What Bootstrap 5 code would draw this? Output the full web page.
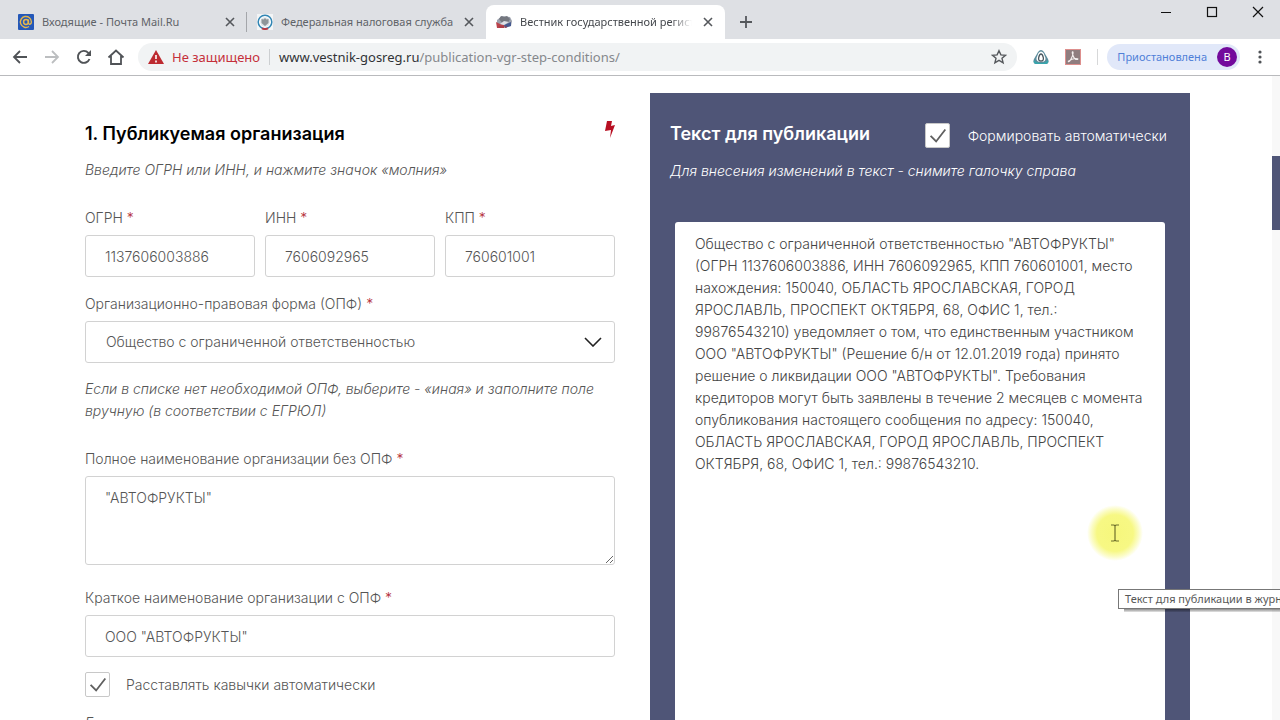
<!DOCTYPE html>
<html lang="ru">
<head>
<meta charset="utf-8">
<meta name="viewport" content="width=device-width, initial-scale=1">
<title>Вестник государственной регистрации</title>
<link href="https://cdn.jsdelivr.net/npm/bootstrap@5.3.0/dist/css/bootstrap.min.css" rel="stylesheet">
<style>
  :root { --slate: #4f5577; --line: #d2d2d2; --ink: #555; }
  body { font-family: "Inter", "Liberation Sans", sans-serif; font-size: 14px; line-height: 22px; font-weight: 300; color: var(--ink); background: #fff; }
  button { color: inherit; }
  .plain { border: 0; background: none; padding: 0; display: flex; align-items: center; justify-content: center; flex: none; }

  /* browser frame */
  .chrome { font-family: "Noto Sans", "Open Sans", sans-serif; font-weight: 400; background: #dee0e4; color: #5f6368; }
  .strip { height: 39px; padding: 5px 0 0 8px; }
  .tab { width: 239px; height: 34px; padding: 0 9px 0 10px; font-size: 11px; line-height: 18px; gap: 8px; }
  .tab.divided { background: linear-gradient(#a4a6aa, #a4a6aa) right center / 1px 20px no-repeat; }
  .tab.current { background: #fff; border-radius: 8px 8px 0 0; color: #45484d; }
  .tab-name { flex: 1 1 0; min-width: 0; overflow: hidden; white-space: nowrap; }
  .current .tab-name { -webkit-mask-image: linear-gradient(90deg, #000 88%, transparent); mask-image: linear-gradient(90deg, #000 88%, transparent); }
  .new-tab { width: 42px; height: 34px; }
  .window-keys { gap: 30px; height: 14px; margin-right: 14px; }
  .toolbar { height: 37px; background: #fff; border-bottom: 1px solid #b9babd; padding: 0 12px; }
  .toolbar .plain { width: 16px; height: 28px; }
  .omnibox { height: 28px; border-radius: 14px; background: #f1f3f4; margin-left: 14px; padding: 0 10px; font-size: 13px; }
  .warn { color: #c5303a; gap: 8px; }
  .url { color: #85888c; white-space: nowrap; }
  .url b { color: #303236; font-weight: 400; }
  .split { height: 16px; margin: auto 9px; }
  .profile { height: 26px; border-radius: 13px; background: #e1e8f9; color: #5080d8; font-size: 11px; padding: 0 3px 0 10px; gap: 10px; border: 0; }
  .avatar { width: 20px; height: 20px; border-radius: 50%; background: #730a9c; color: #fff; line-height: 20px; }
  .toolbar .menu-key { margin-left: 12px; }

  /* page */
  .viewport { min-height: 0; overflow: hidden; }
  .sheet { padding: 17px 82px 0 85px; display: grid; grid-template-columns: 53fr 54fr; gap: 35px; }
  .rail { width: 8px; background: #f8f8f8; padding-top: 80px; }
  .thumb { height: 74px; background: var(--slate); }
  h2 { font-size: 18px; line-height: 26px; font-weight: 600; margin: 0; color: #000; }
  .form-side { padding-top: 28px; }
  .hint { font-style: italic; margin: 0; }
  .lead-in { margin-top: 12px; }
  .field label { display: block; margin-bottom: 6px; }
  .codes { --bs-gutter-x: 10px; padding-top: 26px; }
  .near { padding-top: 15px; }
  .far { padding-top: 26px; }
  .after-box { padding-top: 22px; }
  .req { color: #b5303a; }
  .form-control, .form-select { font: inherit; color: var(--ink); border: 1px solid var(--line); border-radius: 3px; padding: 9px 19px; height: 42px; }
  .form-select { padding-left: 20px; background-image: url("data:image/svg+xml,%3Csvg xmlns='http://www.w3.org/2000/svg' viewBox='0 0 18 10'%3E%3Cpath d='M1 1l8 8 8-8' fill='none' stroke='%23222' stroke-width='1.6'/%3E%3C/svg%3E"); background-size: 18px 10px; background-position: right 12px center; }
  textarea.name-box { height: 89px; padding-top: 10px; resize: vertical; }
  .form-check-input { width: 25px; height: 25px; margin: 0; flex: none; border: 1px solid #c8c8c8; }
  .form-check-input[type=checkbox] { border-radius: 2px; }
  .form-check-input:checked { background-color: #fff; border-color: #c8c8c8; }
  .form-check-input:checked[type=checkbox] { background-image: url("data:image/svg+xml,%3Csvg xmlns='http://www.w3.org/2000/svg' viewBox='0 0 25 25'%3E%3Cpath d='M5 13l6 6L21 6' fill='none' stroke='%23606060' stroke-width='2'/%3E%3C/svg%3E"); }
  .panel { background: var(--slate); color: #fff; padding: 28px 20px 0; }
  .panel h2 { color: #fff; }
  .auto-box { gap: 18px; padding: 2px 3px 0 0; }
  .panel-body { padding: 40px 5px 0; }
  .panel-text { height: 640px; padding: 11px 20px; color: #444; border: 0; resize: none; overflow: hidden; }
  .spot { position: absolute; left: 1087px; top: 505px; width: 56px; height: 56px; border-radius: 50%; background: radial-gradient(circle closest-side, #f6f77c 0, #f7f884 65%, rgba(249,250,160,.6) 85%, rgba(255,255,220,0) 100%); }
  .tip { position: absolute; left: 1118px; right: 0; top: 589px; height: 20px; border: 1px solid #777; border-right: 0; background: #fff; color: #575757; font: 400 11px/18px "Noto Sans", "Open Sans", sans-serif; padding-left: 6px; white-space: nowrap; overflow: hidden; }
  .tip-shade { position: absolute; left: 1124px; right: 0; top: 609px; height: 3px; background: linear-gradient(rgba(0,0,0,.45), rgba(0,0,0,.1)); }
</style>
</head>
<body class="vh-100 d-flex flex-column overflow-hidden position-relative">
<header class="chrome flex-shrink-0">
  <div class="strip d-flex align-items-start">
    <div class="tab divided d-flex align-items-center">
      <svg width="16" height="16" viewBox="0 0 16 16"><rect width="16" height="16" rx="1" fill="#2458b8"/><circle cx="8" cy="8" r="2.4" fill="none" stroke="#e5b64c" stroke-width="1.5"/><path d="M10.4 5.6v3.2c0 2.3 3 1.8 3-.8A5.5 5.5 0 1 0 11 12.5" fill="none" stroke="#e5b64c" stroke-width="1.4"/></svg>
      <span class="tab-name">Входящие - Почта Mail.Ru</span>
      <button class="plain" aria-label="Закрыть"><svg width="16" height="16" viewBox="0 0 16 16"><path d="M4 4l8 8M12 4l-8 8" stroke="#55585c" stroke-width="1.6"/></svg></button>
    </div>
    <div class="tab d-flex align-items-center">
      <svg width="16" height="16" viewBox="0 0 16 16"><rect width="16" height="16" fill="#f3f5f6"/><circle cx="8" cy="8" r="6.8" fill="#fff" stroke="#3286b4" stroke-width="1.5"/><circle cx="8" cy="8" r="4.8" fill="#dfe5e8"/><path d="M4.500 5l2 .5L8 4l1.500 1.500 2-.5v4L8 12 4.500 9z" fill="#8e9599"/><path d="M5 14.300q3 1.500 6 0" stroke="#b63a44" stroke-width="2" fill="none"/></svg>
      <span class="tab-name">Федеральная налоговая служба</span>
      <button class="plain" aria-label="Закрыть"><svg width="16" height="16" viewBox="0 0 16 16"><path d="M4 4l8 8M12 4l-8 8" stroke="#55585c" stroke-width="1.6"/></svg></button>
    </div>
    <div class="tab current d-flex align-items-center">
      <svg width="16" height="16" viewBox="0 0 16 16"><path d="M1 6l5-4 8 1 2 4-1 5-8 1-6-3z" fill="#9aa0ad"/><path d="M3 5l2-3 3 1 3-1 3 3-2 4-5 1z" fill="#74777f"/><path d="M0 8l4 2 4 1v3H1z" fill="#b9424a"/><path d="M8 11l7-3v4l-6 2z" fill="#46598f"/><path d="M4 10l4-3 5 1-5 3z" fill="#dfe1e7"/><path d="M3 13l8 0" stroke="#a33a44"/></svg>
      <span class="tab-name">Вестник государственной регистрации</span>
      <button class="plain" aria-label="Закрыть"><svg width="16" height="16" viewBox="0 0 16 16"><path d="M4 4l8 8M12 4l-8 8" stroke="#55585c" stroke-width="1.6"/></svg></button>
    </div>
    <button class="plain new-tab" aria-label="Новая вкладка"><svg width="14" height="14" viewBox="0 0 14 14"><path d="M7 1v12M1 7h12" stroke="#55585c" stroke-width="1.8"/></svg></button>
    <div class="window-keys d-flex align-items-center ms-auto">
      <button class="plain" aria-label="Свернуть"><svg width="16" height="12" viewBox="0 0 16 12"><path d="M3 6.500h10" stroke="#111"/></svg></button>
      <button class="plain" aria-label="Развернуть"><svg width="16" height="12" viewBox="0 0 16 12"><rect x="3.500" y="1.500" width="9" height="9" fill="none" stroke="#111" stroke-width="1.200"/></svg></button>
      <button class="plain" aria-label="Закрыть окно"><svg width="16" height="12" viewBox="0 0 16 12"><path d="M3 1l10 10M13 1L3 11" stroke="#111" stroke-width="1.200"/></svg></button>
    </div>
  </div>
  <div class="toolbar d-flex align-items-center">
    <div class="d-flex gap-3">
      <button class="plain" aria-label="Назад"><svg width="16" height="16" viewBox="0 0 16 16"><path d="M15 8H2M8 2L2 8l6 6" fill="none" stroke="#505357" stroke-width="1.800"/></svg></button>
      <button class="plain" aria-label="Вперёд"><svg width="16" height="16" viewBox="0 0 16 16"><path d="M1 8h13M8 2l6 6-6 6" fill="none" stroke="#bcbec0" stroke-width="1.800"/></svg></button>
      <button class="plain" aria-label="Обновить"><svg width="16" height="16" viewBox="0 0 16 16"><path d="M13.500 10A6 6 0 1 1 12.300 3.800L14 5.500" fill="none" stroke="#505357" stroke-width="1.900"/><path d="M15 1v6H9z" fill="#505357"/></svg></button>
      <button class="plain" aria-label="Главная"><svg class="flex-shrink-0" width="18" height="16" viewBox="0 0 18 16"><path d="M1.500 8.500L9 1.500l7.500 7M4 7v8h10V7" fill="none" stroke="#505357" stroke-width="1.800"/></svg></button>
    </div>
    <div class="omnibox d-flex align-items-center flex-grow-1">
      <span class="warn d-flex align-items-center"><svg width="16" height="14" viewBox="0 0 16 14"><path d="M8 0l8 14H0z" fill="#bd2a30"/><path d="M8 5v4M8 10.500v2" stroke="#fff" stroke-width="1.600"/></svg>Не защищено</span>
      <span class="vr split"></span>
      <a href="#" class="url text-decoration-none"><b>www.vestnik-gosreg.ru</b>/publication-vgr-step-conditions/</a>
      <button class="plain ms-auto" aria-label="В закладки"><svg width="16" height="16" viewBox="0 0 16 16"><path d="M8 1.700l1.900 4.200 4.600.4-3.500 3 1.100 4.500L8 11.400l-4.100 2.400L5 9.300l-3.500-3 4.600-.4z" fill="none" stroke="#55585c" stroke-width="1.400"/></svg></button>
    </div>
    <div class="d-flex align-items-center gap-3 mx-3">
      <button class="plain" aria-label="Расширение"><svg width="16" height="16" viewBox="0 0 16 16"><path d="M5 3Q8-1 11 3l4 7Q17 15 12 15H4Q-1 15 1 10z" fill="#5b8c9c"/><path d="M1 11q2 3 7 3t7-3q1 4-3 4H4q-4 0-3-4" fill="#35a7ad"/><path d="M5.500 4Q8 1 10.500 4l2 5Q13 13 8 13T3.500 9z" fill="#fff"/><path d="M8 5q1.500 0 2.300 3.500Q11 12 8 12T5.700 8.500Q6.500 5 8 5z" fill="#fff" stroke="#48565e" stroke-width="1.300"/></svg></button>
      <button class="plain" aria-label="Acrobat"><svg width="16" height="16" viewBox="0 0 16 16"><rect x=".5" y=".5" width="15" height="15" fill="#8f7d7f" stroke="#dd8f8d"/><path d="M3 12.500q1.500 1 3.500-3.500T8 3q-1.500-1 0 3.500t4.500 4q1.500-1-2-1T3 12.500" fill="none" stroke="#f3eeee" stroke-width="1.100"/></svg></button>
    </div>
    <span class="vr split ms-0"></span>
    <button class="profile d-flex align-items-center">Приостановлена <span class="avatar text-center">В</span></button>
    <button class="plain menu-key" aria-label="Меню"><svg width="4" height="14" viewBox="0 0 4 14" fill="#505357"><circle cx="2" cy="2" r="1.600"/><circle cx="2" cy="7" r="1.600"/><circle cx="2" cy="12" r="1.600"/></svg></button>
  </div>
</header>

<div class="viewport d-flex flex-grow-1">
  <main class="sheet flex-grow-1">
    <form class="form-side">
      <div class="d-flex justify-content-between align-items-start">
        <h2>1. Публикуемая организация</h2>
        <button type="button" class="plain" aria-label="Заполнить"><svg width="10" height="17" viewBox="0 0 10 17"><path d="M2 0h5L6 5l4-1-5 13 1-8-6 1z" fill="#b80f22"/></svg></button>
      </div>
      <p class="hint lead-in">Введите ОГРН или ИНН, и нажмите значок «молния»</p>
      <div class="row field codes">
        <div class="col"><label for="ogrn">ОГРН <span class="req">*</span></label><input id="ogrn" class="form-control" value="1137606003886"></div>
        <div class="col"><label for="inn">ИНН <span class="req">*</span></label><input id="inn" class="form-control" value="7606092965"></div>
        <div class="col"><label for="kpp">КПП <span class="req">*</span></label><input id="kpp" class="form-control" value="760601001"></div>
      </div>
      <div class="field pt-3">
        <label for="opf">Организационно-правовая форма (ОПФ) <span class="req">*</span></label>
        <select id="opf" class="form-select"><option>Общество с ограниченной ответственностью</option></select>
      </div>
      <p class="hint near">Если в списке нет необходимой ОПФ, выберите - «иная» и заполните поле вручную (в соответствии с ЕГРЮЛ)</p>
      <div class="field far">
        <label for="full">Полное наименование организации без ОПФ <span class="req">*</span></label>
        <textarea id="full" class="form-control name-box d-block">"АВТОФРУКТЫ"</textarea>
      </div>
      <div class="field after-box">
        <label for="short">Краткое наименование организации с ОПФ <span class="req">*</span></label>
        <input id="short" class="form-control" value='ООО "АВТОФРУКТЫ"'>
      </div>
      <div class="d-flex align-items-center gap-3 near">
        <input class="form-check-input" type="checkbox" id="quotes" checked><label for="quotes">Расставлять кавычки автоматически</label>
      </div>
      <p class="hint near">Если</p>
    </form>

    <section class="panel">
      <div class="d-flex align-items-start">
        <h2>Текст для публикации</h2>
        <div class="auto-box d-flex align-items-center ms-auto">
          <input class="form-check-input" type="checkbox" id="auto" checked><label for="auto">Формировать автоматически</label>
        </div>
      </div>
      <p class="hint mt-2 pt-1">Для внесения изменений в текст - снимите галочку справа</p>
      <div class="panel-body">
        <textarea class="form-control panel-text" aria-label="Текст для публикации">Общество с ограниченной ответственностью "АВТОФРУКТЫ" (ОГРН 1137606003886, ИНН 7606092965, КПП 760601001, место нахождения: 150040, ОБЛАСТЬ ЯРОСЛАВСКАЯ, ГОРОД ЯРОСЛАВЛЬ, ПРОСПЕКТ ОКТЯБРЯ, 68, ОФИС 1, тел.: 99876543210) уведомляет о том, что единственным участником ООО "АВТОФРУКТЫ" (Решение б/н от 12.01.2019 года) принято решение о ликвидации ООО "АВТОФРУКТЫ". Требования кредиторов могут быть заявлены в течение 2 месяцев с момента опубликования настоящего сообщения по адресу: 150040, ОБЛАСТЬ ЯРОСЛАВСКАЯ, ГОРОД ЯРОСЛАВЛЬ, ПРОСПЕКТ ОКТЯБРЯ, 68, ОФИС 1, тел.: 99876543210.</textarea>
      </div>
    </section>
  </main>
  <div class="rail flex-shrink-0"><div class="thumb"></div></div>
</div>

<div class="spot d-flex align-items-center justify-content-center"><svg width="8" height="18" viewBox="0 0 8 18"><path d="M0 1h3l1 1 1-1h3M4 2v14M0 17h3l1-1 1 1h3" fill="none" stroke="#6f702c" stroke-width="1.200"/></svg></div>
<div class="tip-shade"></div>
<div class="tip" role="tooltip">Текст для публикации в журнале</div>
<script src="https://cdn.jsdelivr.net/npm/bootstrap@5.3.0/dist/js/bootstrap.bundle.min.js"></script>
</body>
</html>
